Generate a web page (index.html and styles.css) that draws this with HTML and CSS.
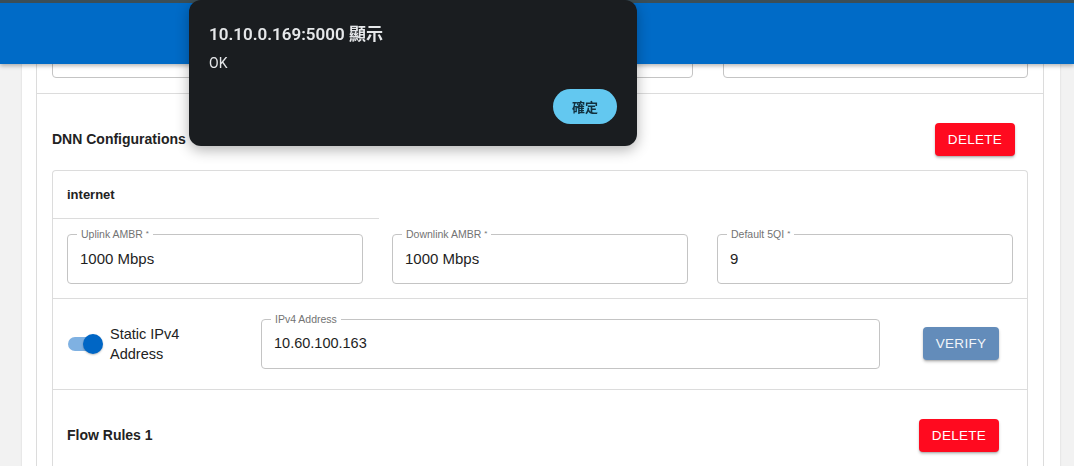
FILE: index.html
```html
<!DOCTYPE html>
<html lang="zh-Hant">
<head>
<meta charset="utf-8">
<title>DNN Configurations</title>
<link rel="stylesheet" href="styles.css">
</head>
<body>
<header class="appbar">
  <div class="chrome-strip"></div>
  <div class="bluebar"></div>
</header>

<main class="paper">
  <section class="card">
    <div class="top-fields">
      <fieldset class="field"><legend>Field</legend><div class="value">&nbsp;</div></fieldset>
      <fieldset class="field"><legend>Field</legend><div class="value">&nbsp;</div></fieldset>
    </div>

    <div class="dnn-section">
      <div class="section-head">
        <h3 class="title">DNN Configurations</h3>
        <button class="btn btn-red">DELETE</button>
      </div>

      <div class="dnn-card">
        <div class="dnn-name">internet</div>
        <div class="ambr-row">
          <fieldset class="field"><legend>Uplink AMBR<span class="req">*</span></legend><div class="value">1000 Mbps</div></fieldset>
          <fieldset class="field"><legend>Downlink AMBR<span class="req">*</span></legend><div class="value">1000 Mbps</div></fieldset>
          <fieldset class="field"><legend>Default 5QI<span class="req">*</span></legend><div class="value">9</div></fieldset>
        </div>
        <div class="ip-row">
          <label class="switch-label">
            <span class="switch"><span class="track"></span><span class="thumb"></span></span>
            <span class="switch-text">Static IPv4 Address</span>
          </label>
          <fieldset class="field ip-field"><legend>IPv4 Address</legend><div class="value">10.60.100.163</div></fieldset>
          <button class="btn btn-blue">VERIFY</button>
        </div>
        <div class="flow-head">
          <h4 class="title">Flow Rules 1</h4>
          <button class="btn btn-red">DELETE</button>
        </div>
      </div>
    </div>
  </section>
</main>

<div class="dialog" role="alertdialog">
  <div class="dialog-title">10.10.0.169:5000 顯示</div>
  <div class="dialog-msg">OK</div>
  <div class="dialog-actions"><button class="dialog-btn">確定</button></div>
</div>
</body>
</html>
```
FILE: styles.css
```css
* { box-sizing: border-box; }
html, body { margin: 0; padding: 0; }
body {
  background: #f2f2f2;
  font-family: "Liberation Sans", Arial, sans-serif;
  color: #222;
  height: 466px;
  overflow: hidden;
}

.appbar {
  position: fixed;
  top: 0; left: 0; right: 0;
  z-index: 10;
  box-shadow: 0 2px 4px rgba(0,0,0,0.28);
}
.chrome-strip { height: 4px; background: #3b4e56; border-bottom: 1px solid #55676e; }
.bluebar { height: 61px; background: #006bc7; margin-top: -1px; }

.paper {
  margin: 0 14px 0 22px;
  background: #fff;
  padding: 0 16px 0 14px;
  min-height: 466px;
  box-shadow: 0 0 2px rgba(0,0,0,0.12);
}
.card {
  border: 1px solid #dcdcdc;
  border-top: none;
}

.top-fields {
  display: grid;
  grid-template-columns: 641px 305px;
  column-gap: 30px;
  padding: 22px 15px 15px 15px;
  border-bottom: 1px solid #dcdcdc;
}

.field {
  margin: 0;
  min-width: 0;
  padding: 0 12px;
  border: 1px solid #c4c4c4;
  border-radius: 4px;
}
.field legend {
  font-size: 10.5px;
  line-height: 12px;
  color: #737373;
  padding: 0 4px;
  margin-left: -3px;
}
.field legend .req {
  font-size: 8px;
  margin-left: 3px;
  vertical-align: 2px;
}
.field .value {
  font-size: 15px;
  line-height: 20px;
  padding: 9px 0 14px;
  color: #1e1e1e;
}

.dnn-section { padding: 29px 15px 0 15px; }
.section-head {
  display: flex;
  align-items: center;
  justify-content: space-between;
  padding-right: 13px;
}
.title {
  margin: 0 0 2px 0;
  font-size: 14px;
  font-weight: bold;
  color: #222;
}

.btn {
  font-family: "Liberation Sans", Arial, sans-serif;
  border: none;
  border-radius: 4px;
  color: #fff;
  font-size: 13.5px;
  letter-spacing: 0.3px;
  height: 33px;
  padding: 0;
  box-shadow: 0 2px 3px rgba(0,0,0,0.22), 0 1px 1px rgba(0,0,0,0.12);
}
.btn-red { background: #ff0a1f; width: 80px; }
.btn-blue { background: #638cba; width: 76px; color: #f2f5f9; }

.dnn-card {
  margin-top: 14px;
  border: 1px solid #dcdcdc;
  border-radius: 4px;
  border-bottom: none;
}
.dnn-name {
  width: 326px;
  height: 48px;
  line-height: 47px;
  padding-left: 14px;
  font-size: 13px;
  font-weight: bold;
  border-bottom: 1px solid #dcdcdc;
}
.ambr-row {
  display: grid;
  grid-template-columns: repeat(3, 296px);
  column-gap: 29px;
  padding: 9px 14px 14px;
  border-bottom: 1px solid #dcdcdc;
}

.ip-row {
  display: flex;
  align-items: center;
  padding: 14px 28px 20px 14px;
  border-bottom: 1px solid #dcdcdc;
}
.switch-label {
  display: flex;
  align-items: center;
  width: 194px;
  flex: none;
  margin-top: 6px;
}
.switch {
  position: relative;
  width: 34px;
  height: 14px;
  flex: none;
  margin: 0 9px 0 1px;
}
.switch .track {
  display: block;
  width: 100%;
  height: 100%;
  border-radius: 7px;
  background: #7fb1e2;
}
.switch .thumb {
  position: absolute;
  top: -3px;
  left: 15px;
  width: 20px;
  height: 20px;
  border-radius: 50%;
  background: #0066c5;
  box-shadow: 0 1px 2px rgba(0,0,0,0.25);
}
.switch-text {
  width: 96px;
  font-size: 14.5px;
  line-height: 20px;
  color: #222;
  margin-left: -1px;
}
.ip-field { width: 619px; flex: none; }
.ip-field .value { padding: 8px 0 15px; font-size: 14.5px; }
.ip-row .btn-blue { margin-left: auto; margin-top: 4px; }

.flow-head {
  display: flex;
  align-items: center;
  justify-content: space-between;
  padding: 29px 28px 20px 14px;
}

.dialog {
  position: fixed;
  top: 0;
  left: 189px;
  width: 448px;
  height: 146px;
  z-index: 20;
  background: #1a1d20;
  border-radius: 12px;
  padding: 24px 20px 0 20px;
  box-shadow: 0 4px 14px rgba(0,0,0,0.3);
  font-family: Roboto, "Noto Sans CJK TC", sans-serif;
}
.dialog-title {
  font-size: 17px;
  line-height: 20px;
  font-weight: 600;
  color: #e6e8ea;
}
.dialog-msg {
  margin-top: 10px;
  font-size: 14px;
  line-height: 18px;
  color: #e6e8ea;
}
.dialog-actions {
  display: flex;
  justify-content: flex-end;
  margin-top: 17px;
}
.dialog-btn {
  width: 64px;
  height: 35px;
  border: none;
  border-radius: 18px;
  background: #63c8f0;
  color: #12303e;
  font-size: 13px;
  font-family: Roboto, "Noto Sans CJK TC", sans-serif;
  font-weight: 600;
  padding: 0;
}
```
